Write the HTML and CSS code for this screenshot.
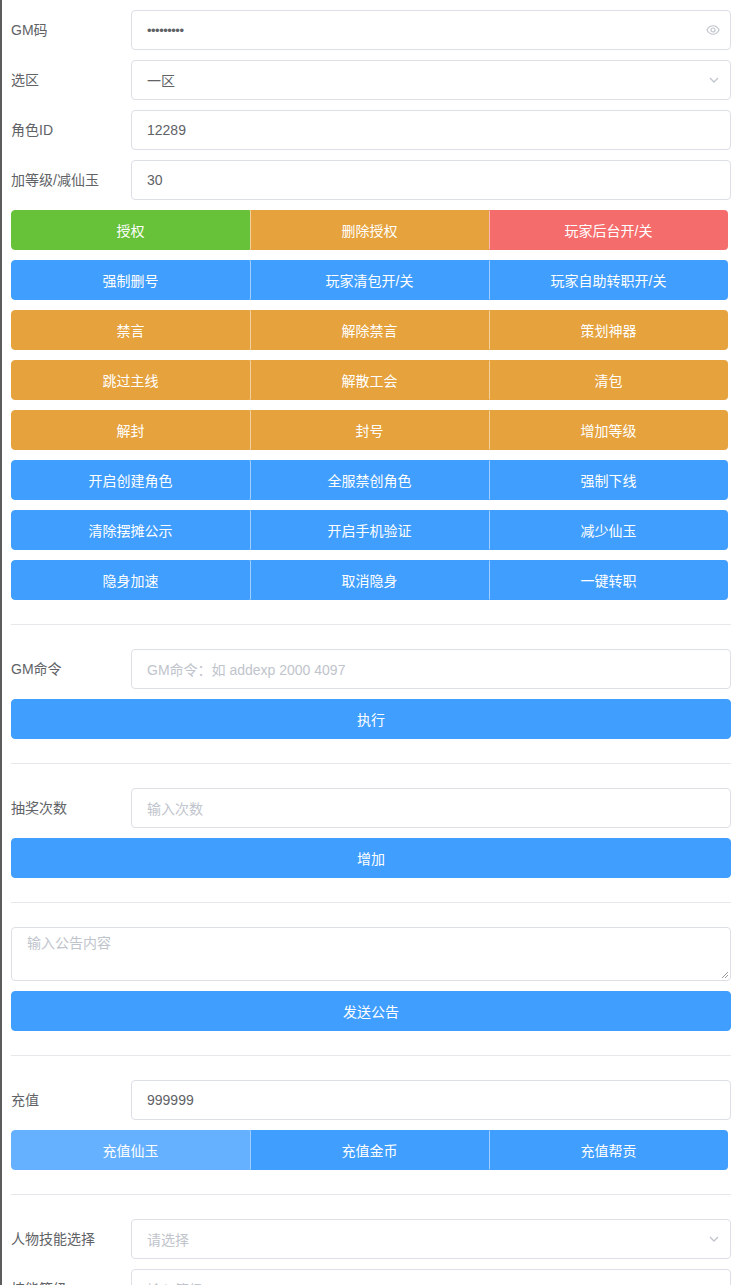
FILE: index.html
```html
<!DOCTYPE html>
<html lang="zh">
<head>
<meta charset="utf-8">
<title>GM</title>
<link rel="stylesheet" href="styles.css">
</head>
<body>
<div class="page">
  <div class="row">
    <label class="lbl">GM码</label>
    <div class="input">
      <span class="val pwd">•••••••••</span>
      <svg class="suffix" width="14" height="14" viewBox="0 0 16 16"><path d="M1 8 C3 4.5 5.5 3.2 8 3.2 S13 4.5 15 8 C13 11.5 10.5 12.8 8 12.8 S3 11.5 1 8 Z" fill="none" stroke="#c0c4cc" stroke-width="1.3"/><circle cx="8" cy="8" r="2.3" fill="none" stroke="#c0c4cc" stroke-width="1.3"/></svg>
    </div>
  </div>
  <div class="row">
    <label class="lbl">选区</label>
    <div class="input">
      <span class="val">一区</span>
      <svg class="suffix" width="12" height="12" viewBox="0 0 12 12"><path d="M2 4 L6 8 L10 4" fill="none" stroke="#c0c4cc" stroke-width="1.3"/></svg>
    </div>
  </div>
  <div class="row">
    <label class="lbl">角色ID</label>
    <div class="input"><span class="val">12289</span></div>
  </div>
  <div class="row">
    <label class="lbl">加等级/减仙玉</label>
    <div class="input"><span class="val">30</span></div>
  </div>

  <div class="group">
    <button class="btn success">授权</button>
    <button class="btn warning">删除授权</button>
    <button class="btn danger">玩家后台开/关</button>
  </div>
  <div class="group">
    <button class="btn primary">强制删号</button>
    <button class="btn primary">玩家清包开/关</button>
    <button class="btn primary">玩家自助转职开/关</button>
  </div>
  <div class="group">
    <button class="btn warning">禁言</button>
    <button class="btn warning">解除禁言</button>
    <button class="btn warning">策划神器</button>
  </div>
  <div class="group">
    <button class="btn warning">跳过主线</button>
    <button class="btn warning">解散工会</button>
    <button class="btn warning">清包</button>
  </div>
  <div class="group">
    <button class="btn warning">解封</button>
    <button class="btn warning">封号</button>
    <button class="btn warning">增加等级</button>
  </div>
  <div class="group">
    <button class="btn primary">开启创建角色</button>
    <button class="btn primary">全服禁创角色</button>
    <button class="btn primary">强制下线</button>
  </div>
  <div class="group">
    <button class="btn primary">清除摆摊公示</button>
    <button class="btn primary">开启手机验证</button>
    <button class="btn primary">减少仙玉</button>
  </div>
  <div class="group last">
    <button class="btn primary">隐身加速</button>
    <button class="btn primary">取消隐身</button>
    <button class="btn primary">一键转职</button>
  </div>

  <hr class="divider">

  <div class="row">
    <label class="lbl">GM命令</label>
    <div class="input"><span class="ph">GM命令：如 addexp 2000 4097</span></div>
  </div>
  <button class="btn primary full">执行</button>

  <hr class="divider">

  <div class="row">
    <label class="lbl">抽奖次数</label>
    <div class="input"><span class="ph">输入次数</span></div>
  </div>
  <button class="btn primary full">增加</button>

  <hr class="divider">

  <div class="textarea">
    <span class="ph">输入公告内容</span>
    <svg class="grip" width="8" height="8" viewBox="0 0 8 8"><path d="M7 1 L1 7 M7 4 L4 7" stroke="#999" stroke-width="1"/></svg>
  </div>
  <button class="btn primary full">发送公告</button>

  <hr class="divider">

  <div class="row">
    <label class="lbl">充值</label>
    <div class="input"><span class="val">999999</span></div>
  </div>
  <div class="group last">
    <button class="btn primary light">充值仙玉</button>
    <button class="btn primary">充值金币</button>
    <button class="btn primary">充值帮贡</button>
  </div>

  <hr class="divider">

  <div class="row">
    <label class="lbl">人物技能选择</label>
    <div class="input">
      <span class="ph">请选择</span>
      <svg class="suffix" width="12" height="12" viewBox="0 0 12 12"><path d="M2 4 L6 8 L10 4" fill="none" stroke="#c0c4cc" stroke-width="1.3"/></svg>
    </div>
  </div>
  <div class="row">
    <label class="lbl">技能等级</label>
    <div class="input"><span class="ph">输入等级</span></div>
  </div>
</div>
</body>
</html>
```

FILE: styles.css
```css
html, body {
  margin: 0;
  padding: 0;
  background: #fff;
}
body {
  border-left: 2px solid #5c5c5c;
  font-family: "Liberation Sans", "Noto Sans CJK SC", sans-serif;
  font-size: 14px;
  color: #606266;
  height: 1285px;
  overflow: hidden;
  box-sizing: border-box;
}
.page {
  width: 720px;
  padding: 10px 0 0 9px;
}
.row {
  display: flex;
  align-items: center;
  height: 40px;
  margin-bottom: 10px;
}
.lbl {
  width: 120px;
  flex: none;
  font-size: 14px;
  color: #606266;
  line-height: 40px;
}
.input {
  flex: 1;
  height: 40px;
  box-sizing: border-box;
  border: 1px solid #dcdfe6;
  border-radius: 4px;
  padding: 0 15px;
  display: flex;
  align-items: center;
  justify-content: space-between;
  background: #fff;
}
.val {
  color: #606266;
}
.pwd {
  font-family: "Liberation Sans", sans-serif;
  font-size: 13px;
  letter-spacing: -0.5px;
}
.ph {
  color: #c0c4cc;
}
.suffix {
  flex: none;
  margin-right: -5px;
}
.group {
  display: flex;
  width: 717px;
  margin-bottom: 10px;
}
.group.last {
  margin-bottom: 0;
}
.btn {
  font-family: "Liberation Sans", "Noto Sans CJK SC", sans-serif;
  font-size: 14px;
  color: #fff;
  height: 40px;
  border: 1px solid transparent;
  padding: 0;
  margin: 0;
  cursor: pointer;
  box-sizing: border-box;
}
.group .btn {
  flex: 1;
  border-radius: 0;
}
.group .btn:first-child {
  border-radius: 4px 0 0 4px;
}
.group .btn:last-child {
  border-radius: 0 4px 4px 0;
}
.success { background: #67c23a; border-color: #67c23a; }
.warning { background: #e6a23c; border-color: #e6a23c; }
.danger { background: #f56c6c; border-color: #f56c6c; }
.primary { background: #409eff; border-color: #409eff; }
.primary.light { background: #66b1ff; border-color: #66b1ff; }
.group .btn + .btn {
  border-left-color: rgba(255, 255, 255, 0.5);
}
.btn.full {
  display: block;
  width: 720px;
  border-radius: 4px;
}
.divider {
  border: 0;
  border-top: 1px solid #e6e8eb;
  margin: 24px 0;
  width: 720px;
}
.textarea {
  position: relative;
  height: 54px;
  box-sizing: border-box;
  border: 1px solid #dcdfe6;
  border-radius: 4px;
  padding: 5px 15px;
  line-height: 21px;
  margin-bottom: 10px;
}
.grip {
  position: absolute;
  right: 1px;
  bottom: 1px;
}
```
